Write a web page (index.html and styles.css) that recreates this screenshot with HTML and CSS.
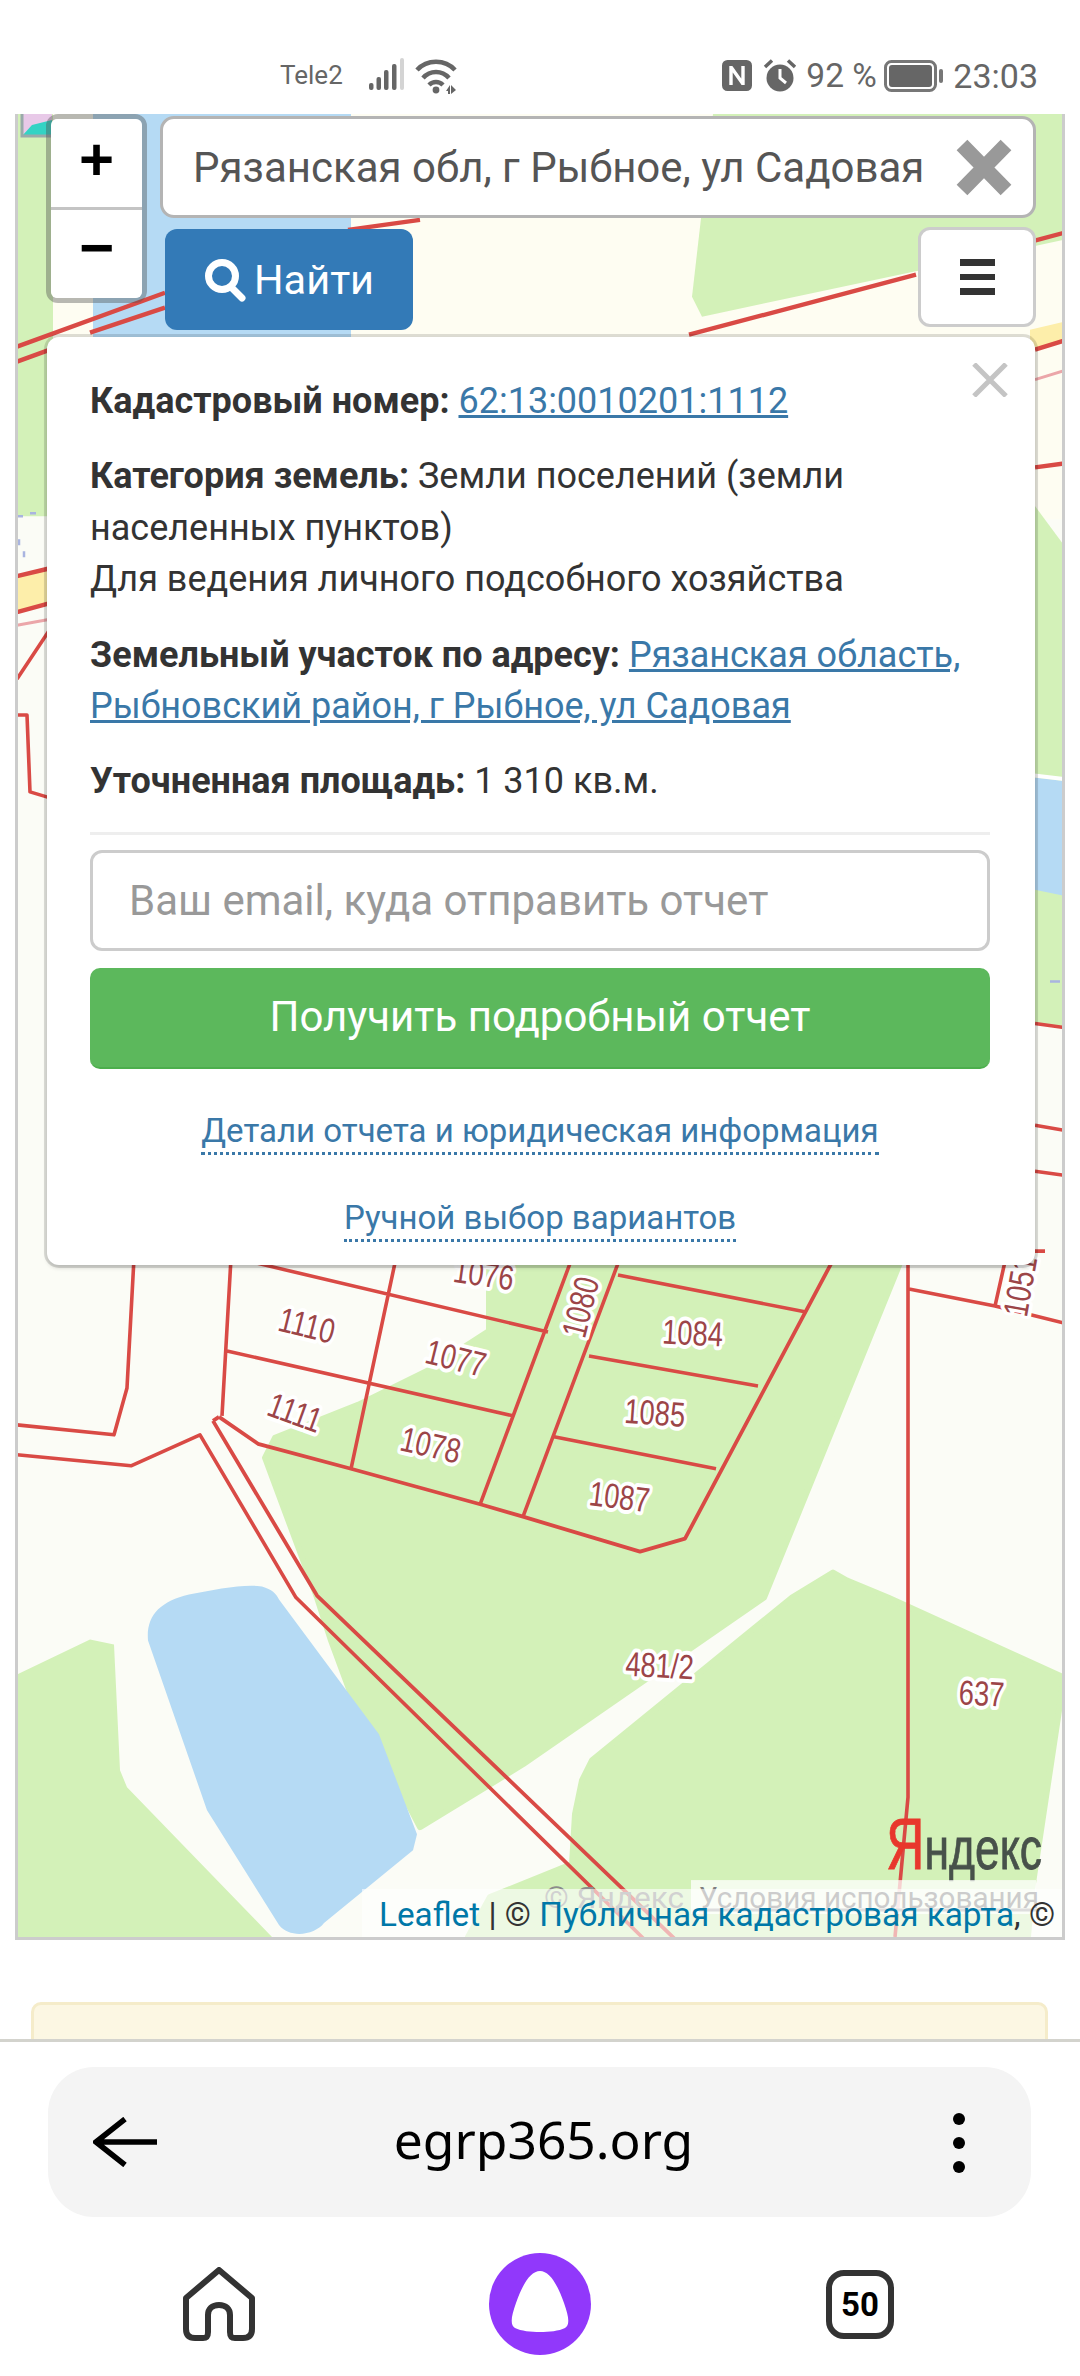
FILE: index.html
```html
<!DOCTYPE html>
<html lang="ru">
<head>
<meta charset="utf-8">
<title>egrp365.org</title>
<link rel="stylesheet" href="styles.css">
</head>
<body>
<div class="phone">
  <header class="status">
    <span class="carrier">Tele2</span>
    <svg class="ic-signal" viewBox="0 0 36 34"><g fill="#666"><rect x="0" y="25" width="4.5" height="7" rx="2"/><rect x="7.5" y="19" width="4.5" height="13" rx="2"/><rect x="15" y="12" width="4.5" height="20" rx="2"/><rect x="23" y="6" width="4.5" height="26" rx="2"/></g><rect x="31" y="0" width="4" height="32" rx="2" fill="#d4d4d4"/></svg>
    <svg class="ic-wifi" viewBox="0 0 42 36"><g fill="none" stroke="#666" stroke-width="4.5"><path d="M2 12C12 1 30 1 40 12"/><path d="M8 20C15 12 27 12 34 20"/><path d="M14 27C18 23 24 23 28 27"/></g><circle cx="21" cy="32" r="3.4" fill="#666"/><path d="M31 33l4-6v9h-2v-3zM36 27l5 5-5 4z" fill="#666"/></svg>
    <span class="status-fill"></span>
    <svg class="ic-nfc" viewBox="0 0 30 31"><rect x="1.5" y="1.5" width="27" height="28" rx="4" fill="#666" stroke="#666" stroke-width="3"/><path d="M9 6v19M21 6v19M9 7l12 17" stroke="#fff" stroke-width="3.4" fill="none"/></svg>
    <svg class="ic-alarm" viewBox="0 0 34 33"><circle cx="17" cy="19" r="13.5" fill="#666"/><path d="M17 10v9l6 5" stroke="#fff" stroke-width="3" fill="none"/><path d="M2 8L9 1.5M32 8L25 1.5" stroke="#666" stroke-width="3.5" fill="none"/></svg>
    <span class="pct">92 %</span>
    <svg class="ic-batt" viewBox="0 0 60 32"><rect x="1.5" y="1.5" width="50" height="29" rx="6" fill="none" stroke="#777" stroke-width="3"/><rect x="5" y="5" width="43" height="22" rx="3" fill="#666"/><rect x="55" y="9" width="4" height="14" rx="2" fill="#777"/></svg>
    <span class="clock">23:03</span>
  </header>

  <main class="content">
    <section class="map">
      <svg class="map-art" viewBox="18 114 1044 1826" preserveAspectRatio="none">
        <rect x="0" y="0" width="1080" height="2000" fill="#fbfcf6"/>
        <g class="water-land">
          <path d="M17 114H53V517H17Z" fill="#d3f1b8"/>
          <path d="M53 114H366V340H53Z" fill="#fefdf2"/>
          <path d="M93 114H351V340H93Z" fill="#b5daf4"/>
          <path d="M351 114H1064V520H351Z" fill="#fefdf2"/>
          <path d="M713 114L692 297L702 317L1064 240V114Z" fill="#d3f1b8"/>
          <path d="M1030 330L1064 322V342L1030 352Z" fill="#fdeeaa"/>
          <path d="M17 577L53 570V605L17 613Z" fill="#fdeeaa"/>
          <path d="M1030 500L1064 546V1029L1030 1024Z" fill="#d3f1b8"/>
          <path d="M1030 778L1064 782V897L1030 890Z" fill="#b5daf4"/>
          <path d="M1030 776L1064 780" stroke="#fff" stroke-width="4"/>
          <path d="M22 114H52V134H22Z" fill="#e8c9e8"/>
          <path d="M22 136L32 125L52 120V136Z" fill="#34d3c4"/>
          <path d="M22 114V136H52" fill="none" stroke="#9aa" stroke-width="3"/>

          <path d="M489 1250V1333L427 1373L358 1407L275 1440L265 1460L317 1600L331 1643L351 1697L420 1830L523 1767L764 1600L906 1250Z" fill="#d3f1b8" stroke="#d3f1b8" stroke-width="6" stroke-linejoin="round"/>
          <path d="M847 1583L833 1575L792 1600L592 1763L582 1783L575 1817L572 1867L490 1900L468 1940H1028L1032 1893L1064 1680L888 1600Z" fill="#d3f1b8" stroke="#d3f1b8" stroke-width="6" stroke-linejoin="round"/>
          <path d="M17 1677L90 1642L114 1647L120 1773L127 1790L272 1940H17Z" fill="#d3f1b8"/>
          <path d="M148 1643C146 1618 160 1604 189 1597C215 1592 245 1586 262 1589C272 1592 276 1596 279 1602L379 1737L417 1837L413 1853L324 1926C315 1938 290 1942 279 1928L207 1813Z" fill="#b5daf4"/>
        </g>
        <g class="plots" fill="none" stroke="#d94a45" stroke-width="3.6" stroke-linejoin="round">
          <path d="M17 347L165 293M90 333L165 308M348 230L420 220M689 335L916 275M1030 242L1064 233" stroke-width="4.4"/>
          <path d="M17 362L50 350M17 577L50 569M17 613L50 604M1035 350L1064 341M1035 468L1064 464" stroke-width="4.4"/>
          <path d="M17 626L50 620M1035 380L1064 371" stroke="#eba6a9" stroke-width="3"/>
          <path d="M17 517h6M30 514h6M19 540v6M24 552v6M1050 983h10" stroke="#a9b4e0" stroke-width="2.5"/>
          <path d="M17 680L50 630M17 716H27L30 793L50 799"/>
          <path d="M1035 1025L1064 1029M1035 1127L1064 1132M1035 1173L1064 1177M1035 1253H1045"/>
          <path d="M134 1260L127 1390L114 1437L17 1427M17 1457L131 1468L200 1437L296 1600L647 1945"/>
          <path d="M213 1423L317 1598L678 1945M219 1419L213 1423M219 1419L258 1446L351 1471L482 1507L523 1519L640 1554L685 1541L833 1262" stroke-width="3.8"/>
          <path d="M231 1260L222 1418M244 1262L548 1334M227 1353L513 1418M396 1260L351 1471M572 1260L480 1507M620 1260L523 1519M618 1277L806 1314M589 1358L758 1388M554 1439L716 1471"/>
          <path d="M908 1260V1800L895 1940M909 1291L995 1308L1064 1325M995 1308L1008 1250"/>
        </g>
        <g class="lot-labels">
          <text transform="translate(304 1339) rotate(14) scale(.88 1.12)">1110</text>
          <text transform="translate(453 1372) rotate(14) scale(.88 1.12)">1077</text>
          <text transform="translate(291 1426) rotate(20) scale(.88 1.12)">1111</text>
          <text transform="translate(428 1459) rotate(13) scale(.88 1.12)">1078</text>
          <text transform="translate(692 1347) rotate(3) scale(.88 1.12)">1084</text>
          <text transform="translate(654 1427) rotate(4) scale(.88 1.12)">1085</text>
          <text transform="translate(618 1511) rotate(7) scale(.88 1.12)">1087</text>
          <text transform="translate(592 1312) rotate(-76) scale(.88 1.12)">1080</text>
          <text transform="translate(482 1288) rotate(8) scale(.88 1.12)">1076</text>
          <text transform="translate(659 1680) rotate(3) scale(.88 1.12)">481/2</text>
          <text transform="translate(981 1708) rotate(3) scale(.88 1.12)">637</text>
          <text transform="translate(1032 1290) rotate(-80) scale(.88 1.12)">1051</text>
        </g>
        <text class="ya-logo" x="886" y="1872" textLength="156" lengthAdjust="spacingAndGlyphs"><tspan class="ya-red">Я</tspan>ндекс</text>
        <rect x="691" y="1883" width="345" height="34" fill="#fff" opacity=".75"/>
        <text class="ya-copy" x="544" y="1911" textLength="140" lengthAdjust="spacingAndGlyphs">© Яндекс</text>
        <text class="ya-terms" x="699" y="1911" textLength="340" lengthAdjust="spacingAndGlyphs">Условия использования</text>
        <path d="M699 1913H1040" stroke="#aaa" stroke-width="3"/>
      </svg>

      <div class="map-ui">
        <div class="top-row">
          <div class="zoom">
            <a class="zoom-btn">+</a>
            <a class="zoom-btn zoom-minus">−</a>
          </div>
          <div class="tools">
            <div class="search">
              <input class="search-input" value="Рязанская обл, г Рыбное, ул Садовая" aria-label="Адрес">
              <svg class="search-x" viewBox="0 0 58 59"><path d="M7 7L51 52M51 7L7 52" stroke="#999" stroke-width="15"/></svg>
            </div>
            <div class="tool-row">
              <button class="find">
                <svg class="find-ic" viewBox="0 0 42 44"><circle cx="18" cy="18" r="13.5" fill="none" stroke="#fff" stroke-width="7"/><path d="M27 29L38 40" stroke="#fff" stroke-width="7" stroke-linecap="round"/></svg>
                <span>Найти</span>
              </button>
              <button class="menu" aria-label="Меню"><span class="bars"></span></button>
            </div>
          </div>
        </div>

        <article class="popup">
          <svg class="popup-x" viewBox="0 0 36 34"><path d="M2 1L34 33M34 1L2 33" stroke="#c4c4c4" stroke-width="5"/></svg>
          <p><b>Кадастровый номер:</b> <a href="#">62:13:0010201:1112</a></p>
          <p><b>Категория земель:</b> Земли поселений (земли населенных пунктов)<br>Для ведения личного подсобного хозяйства</p>
          <p><b>Земельный участок по адресу:</b> <a href="#">Рязанская область, Рыбновский район, г Рыбное, ул Садовая</a></p>
          <p class="last"><b>Уточненная площадь:</b> 1 310 кв.м.</p>
          <hr class="rule">
          <input class="email" placeholder="Ваш email, куда отправить отчет" aria-label="email">
          <button class="report">Получить подробный отчет</button>
          <div class="more"><a class="dotted" href="#">Детали отчета и юридическая информация</a></div>
          <div class="more more-2"><a class="dotted" href="#">Ручной выбор вариантов</a></div>
        </article>
      </div>

      <div class="attrib"><a href="#">Leaflet</a> | © <a href="#">Публичная кадастровая карта</a>, ©</div>
    </section>
    <div class="notice"></div>
  </main>

  <footer class="chrome">
    <div class="urlbar">
      <svg class="ic-back" viewBox="0 0 64 50"><path d="M32 2L3 25L32 48M3 25H64" fill="none" stroke="#000" stroke-width="5.5"/></svg>
      <span class="url">egrp365.org</span>
      <span class="dots"><i></i><i></i><i></i></span>
    </div>
    <nav class="tabs">
      <svg class="ic-home" viewBox="0 0 72 74"><path d="M36 3L3 31V62C3 68 6 71 12 71H20C24 71 25 69 25 65V48C25 42 29 38 36 38C43 38 47 42 47 48V65C47 69 48 71 52 71H60C66 71 69 68 69 62V31Z" fill="none" stroke="#333" stroke-width="6" stroke-linejoin="round"/></svg>
      <svg class="ic-alice" viewBox="0 0 102 102"><circle cx="51" cy="51" r="51" fill="#9138fb"/><path d="M51 18C60 18 68 30 75 50C80 64 81 72 76 75C70 78 60 79 51 79C42 79 32 78 26 75C21 72 22 64 27 50C34 30 42 18 51 18Z" fill="#fff"/></svg>
      <span class="tabcount">50</span>
    </nav>
  </footer>
</div>
</body>
</html>
```
FILE: styles.css
```css
* { box-sizing: border-box; }
html, body { margin: 0; padding: 0; background: #fff; }
body { font-family: Roboto, "Noto Sans", sans-serif; }
.phone { width: 1080px; height: 2376px; display: flex; flex-direction: column; overflow: hidden; }

.status { height: 114px; flex: none; display: flex; align-items: flex-start; padding: 58px 42px 0 280px; color: #666; }
.carrier { font-size: 26px; line-height: 34px; width: 89px; }
.ic-signal { width: 36px; height: 34px; }
.ic-wifi { width: 42px; height: 36px; margin-left: 10px; }
.status-fill { flex: 1; }
.ic-nfc { width: 30px; height: 31px; margin-top: 2px; }
.ic-alarm { width: 34px; height: 33px; margin-left: 11px; margin-top: 1px; }
.pct { font-size: 33.5px; line-height: 36px; margin-left: 9px; width: 78px; white-space: nowrap; }
.ic-batt { width: 60px; height: 32px; margin-top: 2px; }
.clock { font-size: 34px; line-height: 36px; margin-left: 9px; }

.content { flex: 1; min-height: 0; overflow: hidden; padding: 0 15px; }
.map { position: relative; width: 1050px; height: 1826px; border: solid #ccc; border-width: 0 3px 3px; overflow: hidden; }
.map-art { position: absolute; inset: 0; width: 100%; height: 100%; display: block; }
.water-land { filter: blur(.5px); }
.plots { filter: blur(.5px); }
.lot-labels text { font: 31px "Liberation Sans", sans-serif; fill: #9c4548; text-anchor: middle; stroke: #fff; stroke-width: 7px; paint-order: stroke; stroke-linejoin: round; }
.ya-logo { font: 60px "Liberation Sans", sans-serif; fill: #47514a; stroke: #47514a; stroke-width: .8px; }
.ya-red { fill: #e8372c; stroke: #e8372c; font-size: 72px; }
.ya-copy { font: 30px Roboto, sans-serif; fill: #8c8c8c; }
.ya-terms { font: 30px Roboto, sans-serif; fill: #808080; }

.map-ui { position: absolute; inset: 0; padding-left: 28px; }
.top-row { display: flex; gap: 13px; align-items: flex-start; }
.zoom { width: 101px; height: 189px; border: 5px solid rgba(80,80,80,.4); border-radius: 12px; display: flex; flex-direction: column; background-clip: padding-box; }
.zoom-btn { flex: 1; background: #fff; color: #000; font: bold 60px/82px "Liberation Sans", sans-serif; text-align: center; border-radius: 6px 6px 0 0; }
.zoom-minus { border-top: 3px solid #c4c4c4; border-radius: 0 0 6px 6px; line-height: 76px; }
.tools { width: 876px; margin-top: 2px; }
.search { position: relative; height: 102px; }
.search-input { width: 100%; height: 100%; padding: 0 55px 0 30px; border: 3px solid #b4b4b4; border-radius: 14px; background: #fff; color: #555; font: 42px Roboto, sans-serif; outline: none; }
.search-x { position: absolute; right: 23px; top: 22px; width: 58px; height: 59px; }
.tool-row { display: flex; justify-content: space-between; align-items: flex-start; margin-top: 9px; height: 103px; }
.find { width: 248px; height: 101px; margin: 2px 0 0 5px; padding: 0 0 0 39px; border: 0; border-radius: 12px; background: #337ab7; color: #fff; font: 41.5px Roboto, sans-serif; display: flex; align-items: center; gap: 8px; }
.find-ic { width: 42px; height: 44px; }
.menu { width: 118px; height: 100px; padding: 0; border: 3px solid #ccc; border-radius: 12px; background: #fff; display: flex; align-items: center; justify-content: center; }
.bars { width: 35px; height: 36px; background: linear-gradient(#333 0 7px, transparent 7px 15px, #333 15px 21px, transparent 21px 29px, #333 29px 36px); }

.popup { position: relative; width: 988px; height: 928px; margin: 7px 0 0 1px; padding: 39px 45px 0 43px; background: #fff; border-radius: 12px; box-shadow: 0 0 0 3px rgba(0,0,0,.13), 0 3px 4px rgba(0,0,0,.15); color: #333; font-size: 36px; line-height: 51.4px; }
.popup p { margin: 0 0 24px; }
.popup p.last { margin-bottom: 0; }
.popup b { font-weight: 700; }
.popup a { color: #3a78a8; }
.popup-x { position: absolute; right: 27px; top: 26px; width: 36px; height: 34px; }
.rule { height: 3px; border: 0; margin: 24px 0 15px; background: #eee; }
.email { display: block; width: 100%; height: 101px; padding: 0 36px; border: 3px solid #ccc; border-radius: 12px; font: 42px Roboto, sans-serif; outline: none; }
.email::placeholder { color: #999; opacity: 1; }
.report { display: block; width: 100%; height: 101px; margin-top: 17px; padding-bottom: 3px; border: 0; border-bottom: 2px solid #4cae4c; border-radius: 10px; background: #5cb85c; color: #fff; font: 42px Roboto, sans-serif; }
.more { text-align: center; margin-top: 36px; line-height: 51px; font-size: 33px; }
.more-2 { margin-top: 36px; }
.popup a.dotted { color: #3a78a8; text-decoration: none; border-bottom: 3px dotted #3a78a8; padding-bottom: 2px; }

.attrib { position: absolute; right: 0; bottom: 0; width: 700px; height: 48px; padding-left: 17px; background: rgba(255,255,255,.6); color: #333; font-size: 33.3px; line-height: 51px; white-space: nowrap; overflow: hidden; }
.attrib a { color: #0078a8; text-decoration: none; }

.notice { width: 1017px; height: 60px; margin: 62px 0 0 16px; background: #fcf7e3; border: 3px solid #f5ecca; border-radius: 10px; }

.chrome { height: 337px; flex: none; background: #fff; border-top: 3px solid #d3d3cd; padding: 25px 49px 0 48px; }
.urlbar { height: 150px; background: #f4f4f4; border-radius: 46px; display: flex; align-items: center; position: relative; padding: 0 0 0 45px; }
.ic-back { width: 64px; height: 50px; }
.url { position: absolute; left: 0; right: 0; padding: 0 0 6px 8px; text-align: center; color: #000; font: 51.5px "Noto Sans", sans-serif; }
.dots { position: absolute; right: 66px; top: 46px; display: flex; flex-direction: column; gap: 12px; }
.dots i { display: block; width: 12px; height: 12px; border-radius: 50%; background: #000; }
.tabs { display: flex; align-items: center; height: 150px; margin-top: 12px; padding-left: 135px; }
.ic-home { width: 72px; height: 74px; }
.ic-alice { width: 102px; height: 102px; margin-left: 234px; }
.tabcount { width: 68px; height: 69px; margin-left: 235px; border: 6px solid #333; border-radius: 18px; display: flex; align-items: center; justify-content: center; color: #000; font: bold 33px Roboto, sans-serif; }
```
